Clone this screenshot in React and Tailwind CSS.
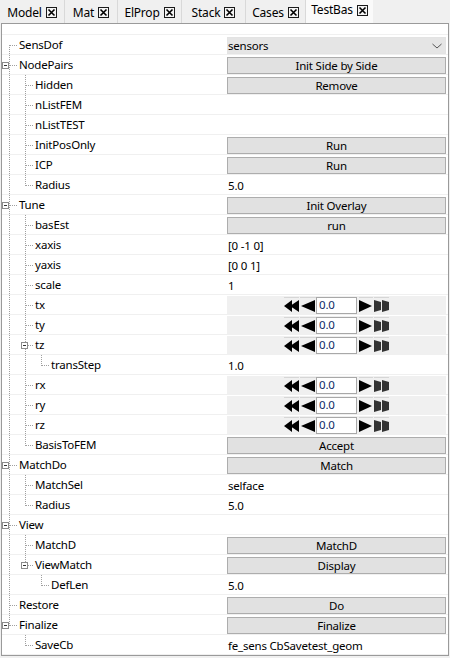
import React from "react"

const tabs = [
  { name: "Model", w: "w-[65px]" },
  { name: "Mat", w: "w-[53px]" },
  { name: "ElProp", w: "w-[64px]" },
  { name: "Stack", w: "w-[64px]" },
  { name: "Cases", w: "w-[60px]" },
  { name: "TestBas", w: "w-[67px]", active: true },
]

const btn = (text) => ({ t: "btn", text })
const txt = (text) => ({ t: "text", text })
const spin = { t: "spin" }
const empty = { t: "empty" }

const tree = [
  { label: "SensDof", v: { t: "select", text: "sensors" } },
  {
    label: "NodePairs",
    v: btn("Init Side by Side"),
    children: [
      { label: "Hidden", v: btn("Remove") },
      { label: "nListFEM", v: empty },
      { label: "nListTEST", v: empty },
      { label: "InitPosOnly", v: btn("Run") },
      { label: "ICP", v: btn("Run") },
      { label: "Radius", v: txt("5.0") },
    ],
  },
  {
    label: "Tune",
    v: btn("Init Overlay"),
    children: [
      { label: "basEst", v: btn("run") },
      { label: "xaxis", v: txt("[0 -1 0]") },
      { label: "yaxis", v: txt("[0 0 1]") },
      { label: "scale", v: txt("1") },
      { label: "tx", v: spin },
      { label: "ty", v: spin },
      { label: "tz", v: spin, children: [{ label: "transStep", v: txt("1.0") }] },
      { label: "rx", v: spin },
      { label: "ry", v: spin },
      { label: "rz", v: spin },
      { label: "BasisToFEM", v: btn("Accept") },
    ],
  },
  {
    label: "MatchDo",
    v: btn("Match"),
    children: [
      { label: "MatchSel", v: txt("selface") },
      { label: "Radius", v: txt("5.0") },
    ],
  },
  {
    label: "View",
    v: empty,
    children: [
      { label: "MatchD", v: btn("MatchD") },
      { label: "ViewMatch", v: btn("Display"), children: [{ label: "DefLen", v: txt("5.0") }] },
    ],
  },
  { label: "Restore", v: btn("Do") },
  {
    label: "Finalize",
    v: btn("Finalize"),
    children: [{ label: "SaveCb", v: txt("fe_sens CbSavetest_geom") }],
  },
]

function flatten(nodes, lines = [], out = []) {
  nodes.forEach((n, i) => {
    const last = i === nodes.length - 1
    out.push({ ...n, lines, last, first: lines.length === 0 && i === 0, depth: lines.length })
    if (n.children) flatten(n.children, [...lines, !last], out)
  })
  return out
}

const rows = flatten(tree)
const DOT = "#a0a0a0"

function CloseBox() {
  return (
    <svg width="11" height="11" viewBox="0 0 11 11" className="block shrink-0">
      <rect x="0.5" y="0.5" width="10" height="10" fill="#f4f4f4" stroke="#1a1a1a" />
      <path d="M2.5 2.5 L8.5 8.5 M8.5 2.5 L2.5 8.5" stroke="#000" strokeWidth="1.6" />
    </svg>
  )
}

function Guide({ on }) {
  return (
    <svg width="16" height="19" className="block shrink-0">
      {on && <line x1="7.5" x2="7.5" y1="0" y2="19" stroke={DOT} strokeDasharray="1 1" />}
    </svg>
  )
}

function Branch({ first, last, open, depth }) {
  const bx = depth === 0 ? 0.5 : 3.5
  return (
    <svg width="16" height="19" className="block shrink-0">
      <line x1="7.5" x2="7.5" y1={first ? 10 : 0} y2={last ? 11 : 19} stroke={DOT} strokeDasharray="1 1" />
      <line x1="8" x2="16" y1="10.5" y2="10.5" stroke={DOT} strokeDasharray="1 1" />
      {open && (
        <g>
          <rect x={bx} y="7.5" width="6" height="6" fill="#fff" stroke="#8c8c8c" />
          <line x1={bx + 1.5} x2={bx + 4.5} y1="10.5" y2="10.5" stroke="#333" />
        </g>
      )}
    </svg>
  )
}

function Arrow({ kind }) {
  const shapes = {
    ll: { w: 15, d: "M0 9 L8 3 L8 15 Z M6 9 L15 3 L15 15 Z", c: "#000" },
    l: { w: 16, d: "M1 9 L15 3 L15 15 Z", c: "#000" },
    r: { w: 14, d: "M0 3 L13 9 L0 15 Z", c: "#000" },
    rr: { w: 15, d: "M0 3 L7 5 L7 13 L0 15 Z M8 3 L15 5 L15 13 L8 15 Z", c: "#333" },
  }
  const s = shapes[kind]
  return (
    <svg width={s.w} height="17" viewBox={`0 0 ${s.w} 17`} className="block shrink-0">
      <rect x="0" y="0" width={s.w} height="1" fill="#d6d6d6" />
      <path d={s.d} fill={s.c} />
    </svg>
  )
}

function Value({ v }) {
  if (v.t === "btn") {
    return (
      <div className="mt-[2px] ml-[2px] mr-[1px] h-[17px] border border-[#adadad] bg-[#e1e1e1] flex items-center justify-center leading-none">
        {v.text}
      </div>
    )
  }
  if (v.t === "select") {
    return (
      <div className="mt-[2px] ml-[2px] mr-[1px] h-[17px] border border-[#e3e3e3] bg-[#e5e5e5] flex items-center justify-between leading-none pr-[3px]">
        <span>{v.text}</span>
        <svg width="10" height="6" className="block">
          <path d="M0.5 1 L5 5 L9.5 1" fill="none" stroke="#555" />
        </svg>
      </div>
    )
  }
  if (v.t === "spin") {
    return (
      <div className="mt-[1px] ml-[2px] mr-[1px] h-[18px] bg-[#f0f0f0] flex items-center justify-center">
        <div className="flex items-center">
          <Arrow kind="ll" />
          <div className="w-[1px]" />
          <Arrow kind="l" />
          <div className="w-[41px] h-[17px] border border-[#a8a8a8] bg-white pl-[2px] flex items-center leading-none text-[#0b2a66]">
            0.0
          </div>
          <div className="w-[2px]" />
          <Arrow kind="r" />
          <div className="w-[1px]" />
          <Arrow kind="rr" />
        </div>
      </div>
    )
  }
  if (v.t === "text") {
    return <div className="h-full pl-[3px] flex items-center pt-[2px] leading-none">{v.text}</div>
  }
  return null
}

export default function App() {
  return (
    <div className="w-[450px] h-[658px] bg-[#f0f0f0] text-[11.5px] tracking-[-0.2px] text-black font-['Segoe_UI','Noto_Sans',sans-serif] overflow-hidden">
      <div className="flex h-[23px] text-[12px]">
        {tabs.map((tab) => (
          <div
            key={tab.name}
            className={
              tab.active
                ? `${tab.w} flex items-center justify-center gap-1 bg-[#fafafa] pb-[3px]`
                : `${tab.w} flex items-center justify-center gap-1 border-r border-[#d9d9d9] pt-[2px]`
            }
          >
            <span className="leading-none">{tab.name}</span>
            <CloseBox />
          </div>
        ))}
      </div>
      <div className="ml-[1px] w-[448px] border border-[#9a9a9a] bg-white">
        <div className="h-[11px] border-b border-[#f0f0f0]" />
        {rows.map((r, i) => (
          <div key={i} className="flex h-[20px] border-b border-[#f0f0f0]">
            <div className="w-[223px] flex items-start">
              {r.lines.map((on, k) => (
                <Guide key={k} on={on} />
              ))}
              <Branch first={r.first} last={r.last} open={!!r.children} depth={r.depth} />
              <span className="pl-[1px] pt-[4px] leading-none">{r.label}</span>
            </div>
            <div className="w-[222px]">
              <Value v={r.v} />
            </div>
          </div>
        ))}
      </div>
    </div>
  )
}
